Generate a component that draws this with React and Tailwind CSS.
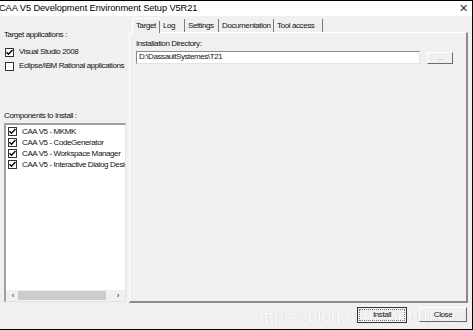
const font = { fontFamily: '"Liberation Sans", Arial, sans-serif' }

function Check({ checked }) {
  return (
    <span className="inline-flex h-[9px] w-[9px] shrink-0 items-center justify-center border border-[#333] bg-white">
      {checked && (
        <svg width="7" height="7" viewBox="0 0 7 7">
          <path d="M0.5 3.2 L2.5 5.3 L6.5 1" stroke="#000" strokeWidth="1.4" fill="none" />
        </svg>
      )}
    </span>
  )
}

const components = [
  'CAA V5 - MKMK',
  'CAA V5 - CodeGenerator',
  'CAA V5 - Workspace Manager',
  'CAA V5 - Interactive Dialog Designer',
]

const tabs = [
  { label: 'Target', w: 'w-[28px]' },
  { label: 'Log', w: 'w-[25px]' },
  { label: 'Settings', w: 'w-[34px]' },
  { label: 'Documentation', w: 'w-[55px]' },
  { label: 'Tool access', w: 'w-[49px]' },
]

export default function App() {
  return (
    <div
      className="flex h-[330px] w-[473px] flex-col overflow-hidden border-t border-r border-b border-black bg-[#f0f0f0] text-[8px] tracking-[-0.4px] text-[#111]"
      style={font}
    >
      <div className="flex h-[15px] shrink-0 items-center justify-between bg-white pr-[4px]">
        <span className="-ml-[1px] text-[9.3px] tracking-[-0.1px] text-black">CAA V5 Development Environment Setup V5R21</span>
        <span className="text-[11px] leading-none text-[#333]">✕</span>
      </div>

      <div className="flex h-[287px] shrink-0">
        <div className="flex w-[129px] shrink-0 flex-col">
          <div className="mt-[13px] pl-[4px]">Target applications :</div>
          <div className="mt-[5px] flex items-center gap-[5px] whitespace-nowrap pl-[5px]">
            <Check checked />
            <span>Visual Studio 2008</span>
          </div>
          <div className="mt-[2px] flex items-center gap-[5px] whitespace-nowrap pl-[5px]">
            <Check />
            <span>Eclipse/IBM Rational applications</span>
          </div>
          <div className="mt-[38px] pl-[4px]">Components to Install :</div>
          <div className="ml-[4px] mt-[1px] flex h-[179px] w-[122px] flex-col border-t-2 border-l-2 border-[#a0a0a0] border-r border-b border-r-[#e3e3e3] border-b-[#e3e3e3] bg-white">
            <div className="flex flex-1 flex-col overflow-hidden pt-[1px]">
              {components.map((c) => (
                <div key={c} className="flex h-[11px] items-center gap-[5px] whitespace-nowrap pl-[2px]">
                  <Check checked />
                  <span>{c}</span>
                </div>
              ))}
            </div>
            <div className="flex h-[11px] items-center bg-[#f0f0f0] px-[2px]">
              <span className="w-[10px] text-center text-[8px] font-bold leading-none text-[#555]">‹</span>
              <div className="h-[9px] w-[88px] bg-[#cdcdcd]" />
              <div className="flex-1" />
              <span className="w-[10px] text-center text-[8px] font-bold leading-none text-[#555]">›</span>
            </div>
          </div>
        </div>

        <div className="flex flex-1 flex-col pr-[4px]">
          <div className="mt-[1px] flex h-[15px] items-end pl-[3px]">
            {tabs.map((t, i) => (
              <div
                key={t.label}
                className={
                  i === 0
                    ? `relative z-10 -mb-[1px] flex h-[15px] items-center border-t border-l border-white bg-[#f0f0f0] pl-[3px] ${t.w}`
                    : `flex h-[13px] items-center border-r border-[#7a7a7a] pl-[3px] ${t.w}`
                }
              >
                {t.label}
                {i === 0 && <span className="absolute right-0 top-[2px] h-[12px] w-px bg-[#7a7a7a]" />}
              </div>
            ))}
          </div>
          <div className="flex flex-1 flex-col border-t border-l border-white border-r-2 border-b-2 border-r-[#8a8a8a] border-b-[#8a8a8a] px-[6px] pt-[5px]">
            <div>Installation Directory:</div>
            <div className="flex items-center gap-[7px]">
              <div className="flex h-[13px] w-[284px] items-center border-t border-l border-[#8a8a8a] border-r border-b border-r-[#e3e3e3] border-b-[#e3e3e3] bg-white pl-[2px]">
                D:\DassaultSystemes\T21
              </div>
              <div className="mt-[2px] flex h-[12px] w-[26px] items-center justify-center border-t border-l border-white border-r border-b border-r-[#6a6a6a] border-b-[#6a6a6a] text-[#999]">
                ...
              </div>
            </div>
          </div>
        </div>
      </div>

      <div className="relative flex flex-1 items-start justify-end gap-[12px] pr-[5px] pt-[4px]">
        <span className="absolute left-[254px] top-[1px] text-[17px] tracking-[0.3px] text-white [text-shadow:0_0_1px_#bbb]">
          https://blog.csdn.net/rustychy
        </span>
        <div className="relative flex h-[16px] w-[50px] items-center justify-center border border-[#333]">
          <div className="absolute inset-[1px] border border-dotted border-[#777]" />
          Install
        </div>
        <div className="relative flex h-[15px] w-[48px] items-center justify-center border-t border-l border-white border-r border-b border-r-[#6a6a6a] border-b-[#6a6a6a]">
          Close
        </div>
      </div>
    </div>
  )
}
